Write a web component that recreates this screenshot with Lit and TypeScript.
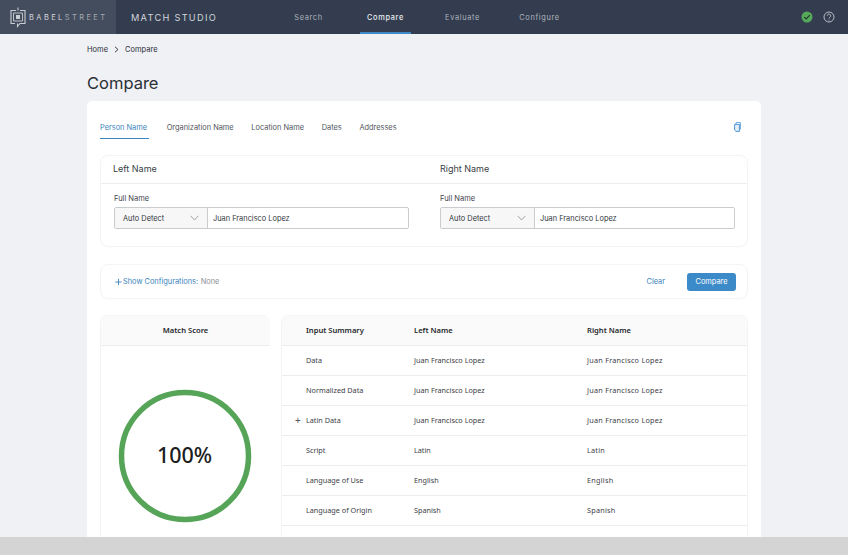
import { LitElement, html, css, svg } from "lit";
import { customElement } from "lit/decorators.js";

const rows = [
  ["", "Data", "Juan Francisco Lopez", "Juan Francisco Lopez"],
  ["", "Normalized Data", "Juan Francisco Lopez", "Juan Francisco Lopez"],
  ["+", "Latin Data", "Juan Francisco Lopez", "Juan Francisco Lopez"],
  ["", "Script", "Latin", "Latin"],
  ["", "Language of Use", "English", "English"],
  ["", "Language of Origin", "Spanish", "Spanish"],
  ["", "", "", ""],
];

@customElement("app-root")
export class AppRoot extends LitElement {
  static styles = css`
    :host { display: flex; flex-direction: column; width: 848px; height: 555px; overflow: hidden; background: #eff1f5; font-family: Inter, "Liberation Sans", sans-serif; color: #2b2f36; }
    * { box-sizing: border-box; }
    .top { flex: 0 0 34px; display: flex; align-items: stretch; background: #333d4f; }
    .brand { width: 116px; background: #444d5d; display: flex; align-items: center; padding-left: 10px; gap: 3px; }
    .brandtext { font-size: 7.5px; letter-spacing: 2.4px; color: #d4d8de; white-space: nowrap; }
    .brandtext span { color: #a3a9b3; }
    .studio { margin-left: 15px; width: 139px; align-self: center; font-size: 9.2px; font-weight: 400; letter-spacing: 1.3px; color: #d2d6dc; white-space: nowrap; }
    .nav { display: flex; height: 34px; }
    .nav a { display: flex; align-items: center; justify-content: center; font-size: 7.4px; letter-spacing: .65px; color: #aeb4bd; width: 77px; border-bottom: 2px solid transparent; padding-top: 2px; }
    .nav a.on { color: #e9ecef; font-weight: 500; width: 51px; margin: 0 13px; border-bottom-color: #3d8ac7; }
    .status { margin-left: auto; display: flex; align-items: center; gap: 9.5px; padding-right: 13.5px; }
    .main { flex: 1; min-height: 0; overflow: hidden; padding: 0 87px; }
    .crumbs { height: 30px; display: flex; align-items: center; gap: 6px; font-size: 7.5px; color: #2b2f36; padding-top: 1px; }
    .title { font-size: 16.5px; line-height: 20px; margin: 9px 0 8px; font-weight: 400; color: #2b2f36; }
    .card { background: #fff; border-radius: 5px 5px 0 0; width: 674px; height: 436px; padding: 13px 13px 0; overflow: hidden; }
    .tabs { display: flex; align-items: flex-start; gap: 17.7px; height: 41px; font-size: 7.4px; color: #50555d; }
    .tab { height: 25px; display: flex; align-items: center; padding-top: 2px; }
    .tab.on { color: #3c84bd; border-bottom: 1px solid #3c84bd; width: 49px; }
    .copy { margin-left: auto; margin-top: 8px; margin-right: 7px; }
    .pair { display: flex; height: 92px; }
    .box { border: 1px solid #f3f4f6; border-radius: 8px; }
    .name { flex: 1; }
    .name.l { border-right: 0; border-radius: 8px 0 0 8px; flex: 0 0 323px; }
    .name.r { border-left: 0; border-radius: 0 8px 8px 0; }
    .nh { height: 28px; border-bottom: 1px solid #ececef; font-size: 9px; line-height: 25px; padding-left: 12px; color: #3a3f46; }
    .name.r .nh { padding-left: 17px; }
    .nb { padding: 10px 13px; }
    .name.l .nb { padding-right: 14px; }
    .name.r .nb { padding-left: 17px; padding-right: 12px; }
    .lab { font-size: 7.5px; line-height: 10px; color: #3f444b; margin-bottom: 3px; }
    .field { display: flex; height: 22px; border: 1px solid #c9cbce; border-radius: 2px; font-size: 7.4px; color: #33373d; align-items: center; }
    .sel { width: 93px; height: 100%; background: #f7f7f8; border-right: 1px solid #c9cbce; display: flex; align-items: center; justify-content: space-between; padding: 0 8px; }
    .name.r .sel { width: 94px; }
    .val { padding-left: 5px; }
    .conf { margin-top: 17px; height: 35px; display: flex; align-items: center; padding: 0 11px 0 14px; font-size: 7.4px; }
    .conf .plus { display: flex; margin-right: 1px; }
    .show { color: #3c84bd; font-weight: 400; margin-right: 2.5px; }
    .none { color: #8c9198; }
    .clear { margin-left: auto; color: #3c84bd; margin-right: 22px; }
    .btn { background: #3d8ac9; color: #fff; width: 49px; height: 18px; border-radius: 3px; display: flex; align-items: center; justify-content: center; }
    .res { margin-top: 16px; display: flex; gap: 11px; font-family: "Noto Sans", "Open Sans", sans-serif; font-size: 7.25px; color: #3c4046; }
    .score { flex: 0 0 170px; height: 300px; border-right: 0; border-bottom: 0; border-radius: 8px 8px 0 0; }
    .sh { height: 30px; background: #fafafa; border-bottom: 1px solid #ececef; border-radius: 8px 8px 0 0; display: flex; align-items: center; justify-content: center; font-weight: 600; font-size: 7.6px; color: #25282d; padding-bottom: 2px; }
    .ring { position: relative; display: flex; justify-content: center; padding-top: 43px; }
    .ring svg { margin-left: -2px; }
    .pct { position: absolute; left: -2px; right: 0; top: 94px; text-align: center; font-size: 21.5px; line-height: 30px; font-weight: 500; color: #1c1e22; }
    .tbl { flex: 1; height: 300px; border-bottom: 0; overflow: hidden; border-radius: 8px 8px 0 0; }
    .tr { display: grid; grid-template-columns: 132px 173px 1fr; height: 30px; border-bottom: 1px solid #ececef; align-items: center; padding-bottom: 2px; }
    .tr.head { background: #fafafa; font-weight: 600; font-size: 7.6px; color: #25282d; }
    .c1 { padding-left: 24px; position: relative; }
    .exp { position: absolute; left: 13px; top: -1px; font-size: 10px; line-height: 12px; color: #555; font-weight: 400; }
    .wide { letter-spacing: .25px; }
    .foot { flex: 0 0 18px; background: #d4d4d4; }
  `;

  chev(color = "#8d9197") {
    return svg`<svg width="9" height="6" viewBox="0 0 9 6"><path d="M.7 .8 4.500 5 8.300 .8" fill="none" stroke=${color} stroke-width=".8"/></svg>`;
  }

  nameBox(cls: string, title: string) {
    return html`<div class="box name ${cls}">
      <div class="nh">${title}</div>
      <div class="nb">
        <div class="lab">Full Name</div>
        <div class="field">
          <div class="sel"><span>Auto Detect</span>${this.chev()}</div>
          <div class="val">Juan Francisco Lopez</div>
        </div>
      </div>
    </div>`;
  }

  render() {
    return html`
      <div class="top">
        <div class="brand">
          <svg width="16" height="21" viewBox="0 0 16 21" fill="none" stroke="#c9cdd4" stroke-width="1.100">
            <path d="M6 3.500H1v13h4M8 .500v3M10 3.500h5v13h-5l-2.500 3v-3"/>
            <path d="M3.500 6h9v8h-9z" stroke-width=".9"/>
            <rect x="6" y="8" width="4" height="4" fill="#c9cdd4" stroke="none"/>
          </svg>
          <div class="brandtext">BABEL<span>STREET</span></div>
        </div>
        <div class="studio">MATCH STUDIO</div>
        <div class="nav">
          <a>Search</a><a class="on">Compare</a><a>Evaluate</a><a>Configure</a>
        </div>
        <div class="status">
          <svg width="12" height="12" viewBox="0 0 12 12"><circle cx="6" cy="6" r="5.500" fill="#56a85a"/><path d="M3.200 6.100 5.200 8 8.800 4.200" fill="none" stroke="#1f3a2a" stroke-width="1.200"/></svg>
          <svg width="12" height="12" viewBox="0 0 12 12" fill="none" stroke="#c6cad0" stroke-width=".9"><circle cx="6" cy="6" r="5"/><path d="M4.300 4.700a1.700 1.700 0 1 1 2.600 1.500c-.6.400-.9.700-.9 1.300"/><circle cx="6" cy="9" r=".5" fill="#c6cad0" stroke="none"/></svg>
        </div>
      </div>
      <div class="main">
        <div class="crumbs">
          <span>Home</span>
          <svg width="5" height="7" viewBox="0 0 5 7"><path d="M1 .8 4 3.500 1 6.200" fill="none" stroke="#2b2f36" stroke-width=".9"/></svg>
          <span>Compare</span>
        </div>
        <div class="title">Compare</div>
        <div class="card">
          <div class="tabs">
            <div class="tab on">Person Name</div>
            <div class="tab">Organization Name</div>
            <div class="tab">Location Name</div>
            <div class="tab">Dates</div>
            <div class="tab">Addresses</div>
            <svg class="copy" width="7" height="10" viewBox="0 0 7 10" fill="none" stroke="#4f94d4" stroke-width="1"><path d="M.6 2.400h4.800v7H2L.6 8z" fill="#e4eff9"/><path d="M2 2.200V.6h4.400v6.600H5.400" stroke="#6ba6dc"/></svg>
          </div>
          <div class="pair">
            ${this.nameBox("l", "Left Name")}
            ${this.nameBox("r", "Right Name")}
          </div>
          <div class="box conf">
            <span class="plus"><svg width="7" height="8" viewBox="0 0 7 8"><path d="M3.500 .8v6.400M.3 4h6.400" stroke="#3c84bd" stroke-width=".9"/></svg></span><span class="show">Show Configurations:</span><span class="none">None</span>
            <span class="clear">Clear</span>
            <div class="btn">Compare</div>
          </div>
          <div class="res">
            <div class="box score">
              <div class="sh">Match Score</div>
              <div class="ring">
                <svg width="134" height="134" viewBox="0 0 134 134"><circle cx="67" cy="67" r="63.500" fill="none" stroke="#56a458" stroke-width="5.500"/></svg>
                <div class="pct">100%</div>
              </div>
            </div>
            <div class="box tbl">
              <div class="tr head"><div class="c1">Input Summary</div><div>Left Name</div><div>Right Name</div></div>
              ${rows.map(
                (r) => html`<div class="tr">
                  <div class="c1">${r[0] ? html`<span class="exp">${r[0]}</span>` : ""}${r[1]}</div>
                  <div>${r[2]}</div>
                  <div class="wide">${r[3]}</div>
                </div>`
              )}
            </div>
          </div>
        </div>
      </div>
      <div class="foot"></div>
    `;
  }
}
